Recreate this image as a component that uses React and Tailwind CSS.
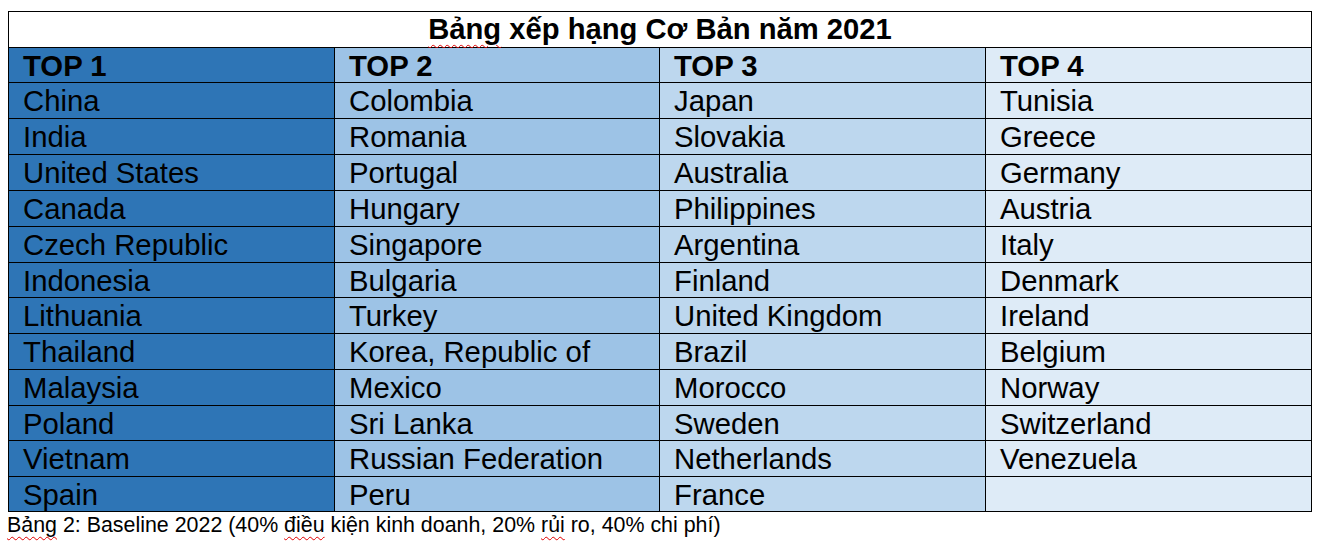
import React from "react";

const cols = [
  ["China", "India", "United States", "Canada", "Czech Republic", "Indonesia", "Lithuania", "Thailand", "Malaysia", "Poland", "Vietnam", "Spain"],
  ["Colombia", "Romania", "Portugal", "Hungary", "Singapore", "Bulgaria", "Turkey", "Korea, Republic of", "Mexico", "Sri Lanka", "Russian Federation", "Peru"],
  ["Japan", "Slovakia", "Australia", "Philippines", "Argentina", "Finland", "United Kingdom", "Brazil", "Morocco", "Sweden", "Netherlands", "France"],
  ["Tunisia", "Greece", "Germany", "Austria", "Italy", "Denmark", "Ireland", "Belgium", "Norway", "Switzerland", "Venezuela", ""],
];

const bgs = ["bg-[#2E75B6]", "bg-[#9DC3E6]", "bg-[#BDD7EE]", "bg-[#DEEBF7]"];
const rowH = ["h-[36px]", "h-[36px]", "h-[36px]", "h-[36px]", "h-[36px]", "h-[35px]", "h-[36px]", "h-[36px]", "h-[36px]", "h-[35px]", "h-[36px]", "h-[34px]"];

function Cell({ c, children, last, bold, h }) {
  return (
    <div
      className={`${bgs[c]} ${h} ${c < 3 ? "border-r border-black" : ""} ${last ? "" : "border-b border-black"} flex items-center pl-[14px] pt-[1px] ${bold ? "font-bold" : ""} whitespace-nowrap overflow-hidden`}
    >
      {children}
    </div>
  );
}

export default function App() {
  return (
    <div className="bg-white w-[1323px] h-[547px] font-['Liberation_Sans',Arial,sans-serif] text-black">
      <div className="pt-[11px] pl-[8px]">
        <div className="w-[1304px] border border-black">
          <div className="h-[36px] border-b border-black flex items-center justify-center text-[29.2px] font-bold leading-none pt-[1px]">
            <span>
              <span className="underline decoration-wavy decoration-[#e00000] decoration-1 underline-offset-[5px]">Bảng</span> xếp hạng Cơ Bản năm 2021
            </span>
          </div>
          <div className="grid grid-cols-[326px_325px_326px_325px] text-[29.3px] leading-none">
            {[0, 1, 2, 3].map((c) => (
              <Cell key={"h" + c} c={c} bold h="h-[35px]">
                TOP {c + 1}
              </Cell>
            ))}
            {rowH.map((h, r) =>
              [0, 1, 2, 3].map((c) => (
                <Cell key={r + "-" + c} c={c} h={h} last={r === 11}>
                  {cols[c][r]}
                </Cell>
              ))
            )}
          </div>
        </div>
        <div className="text-[21.4px] leading-[24px] mt-[1px] -ml-[1px]">
          <span className="underline decoration-wavy decoration-[#e00000] decoration-1 underline-offset-[4px]">Bảng</span> 2: Baseline 2022 (40%{" "}
          <span className="underline decoration-wavy decoration-[#e00000] decoration-1 underline-offset-[4px]">điều</span> kiện kinh doanh, 20%{" "}
          <span className="underline decoration-wavy decoration-[#e00000] decoration-1 underline-offset-[4px]">rủi</span> ro, 40% chi phí)
        </div>
      </div>
    </div>
  );
}
